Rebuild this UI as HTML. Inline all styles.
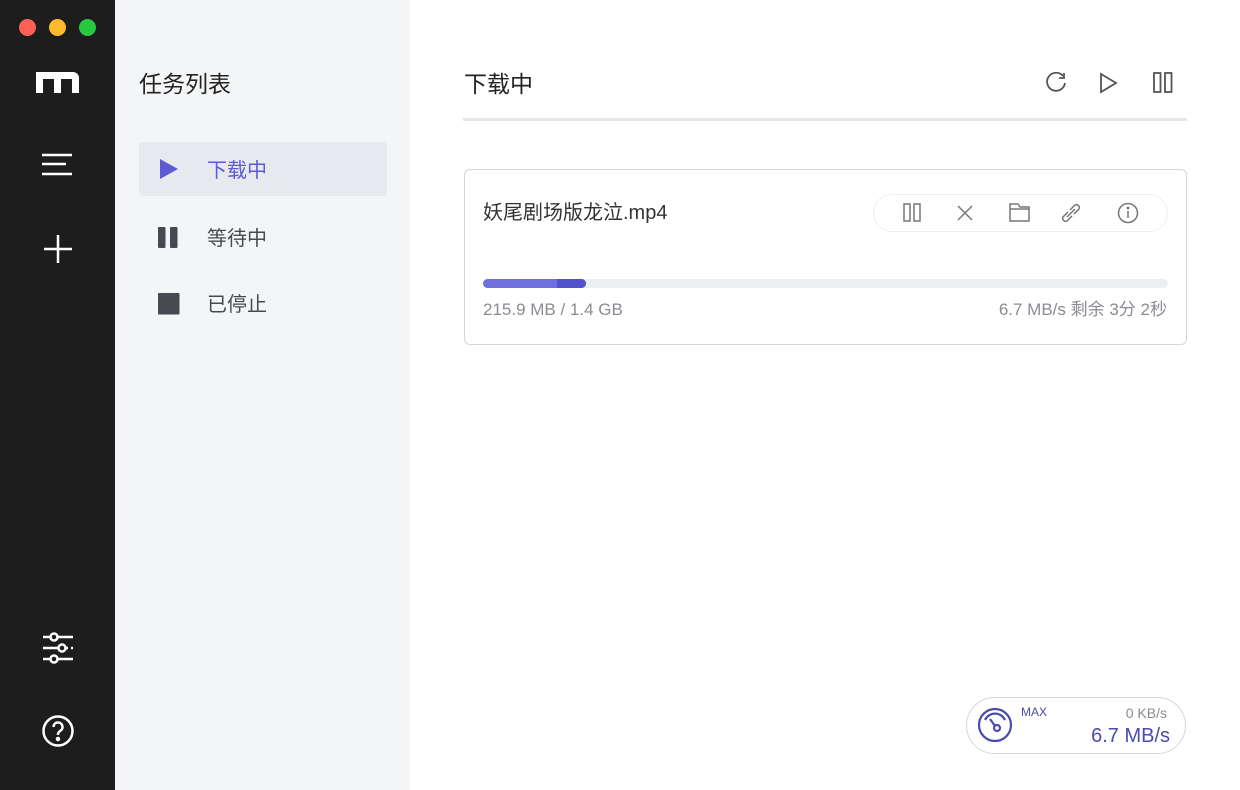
<!DOCTYPE html>
<html><head><meta charset="utf-8"><style>
*{margin:0;padding:0;box-sizing:border-box;line-height:1}
body{width:1240px;height:790px;overflow:hidden;font-family:"Liberation Sans","Noto Sans CJK SC",sans-serif;background:#fff;position:relative}
.side{position:absolute;left:0;top:0;width:115px;height:790px;background:#1d1d1d}
.dot{position:absolute;top:19px;width:17px;height:17px;border-radius:50%}
.nav{position:absolute;left:115px;top:0;width:295px;height:790px;background:#f4f5f7}
.abs{position:absolute;white-space:nowrap}
svg{position:absolute}
</style></head><body>
<div class="side">
<div class="dot" style="left:19px;background:#fe5f57"></div>
<div class="dot" style="left:49px;background:#febc2e"></div>
<div class="dot" style="left:79px;background:#28c840"></div>
<svg style="left:36px;top:71px" width="44" height="24" viewBox="0 0 44 24"><path d="M0 1H37a6 6 0 0 1 6 6V22H36V8H25V22H18V8H7V22H0Z" fill="#fff"/></svg>
<svg style="left:40px;top:152px" width="36" height="26" viewBox="0 0 36 26" stroke="#fff" stroke-width="2.5" fill="none"><path d="M2 3H32M2 12H26M2 22H32"/></svg>
<svg style="left:42px;top:233px" width="32" height="32" viewBox="0 0 32 32" stroke="#fff" stroke-width="2.5"><path d="M16 2V30M2 16H30"/></svg>
<svg style="left:40px;top:630px" width="36" height="36" viewBox="0 0 36 36" stroke="#fff" stroke-width="2.5" fill="none"><circle cx="14" cy="7" r="3.5"/><path d="M3 7H10M18 7H33"/><circle cx="22" cy="18" r="3.5"/><path d="M3 18H18M26 18H28M31 18H33"/><circle cx="14" cy="29" r="3.5"/><path d="M3 29H10M18 29H33"/></svg>
<svg style="left:41px;top:714px" width="34" height="34" viewBox="0 0 34 34" fill="none" stroke="#fff" stroke-width="2.5"><circle cx="17" cy="17" r="14.5"/><path d="M12.5 13a4.5 4.5 0 1 1 6.5 4c-1.5 1-2 2-2 4"/><circle cx="17" cy="25" r="1" fill="#fff"/></svg>
</div>
<div class="nav">
<div class="abs" style="left:24px;top:73px;font-size:23px;color:#222">任务列表</div>
<div class="abs" style="left:24px;top:142px;width:248px;height:54px;background:#e8e9ee;border-radius:4px"></div>
<svg style="left:44px;top:158px" width="20" height="22" viewBox="0 0 20 22"><path d="M1 1L19 11L1 21Z" fill="#5b5bd6"/></svg>
<div class="abs" style="left:92px;top:161px;font-size:20px;color:#5b5bd6">下载中</div>
<svg style="left:43px;top:227px" width="20" height="22"><rect x="0" y="0" width="7.5" height="21" rx="1" fill="#474a51"/><rect x="12" y="0" width="7.5" height="21" rx="1" fill="#474a51"/></svg>
<div class="abs" style="left:92px;top:229px;font-size:20px;color:#474a51">等待中</div>
<svg style="left:43px;top:293px" width="22" height="22"><rect x="0" y="0" width="21.5" height="21.5" rx="1" fill="#474a51"/></svg>
<div class="abs" style="left:92px;top:295px;font-size:20px;color:#474a51">已停止</div>
</div>
<div class="abs" style="left:464px;top:73px;font-size:23px;color:#222">下载中</div>
<svg style="left:1043px;top:70px" width="26" height="26" viewBox="0 0 26 26" fill="none" stroke="#555" stroke-width="1.8"><path d="M20 6A9 9 0 1 0 22 13"/><path d="M21 3V8H16"/></svg>
<svg style="left:1099px;top:72px" width="20" height="22" viewBox="0 0 20 22" fill="none" stroke="#555" stroke-width="1.8"><path d="M2 2L17 11L2 20Z"/></svg>
<svg style="left:1153px;top:72px" width="22" height="22" viewBox="0 0 22 22" fill="none" stroke="#555" stroke-width="1.8"><rect x="1" y="1" width="6.5" height="19"/><rect x="12" y="1" width="6.5" height="19"/></svg>
<div class="abs" style="left:463px;top:118px;width:724px;height:3px;background:#e6e7ea"></div>
<div class="abs" style="left:464px;top:169px;width:723px;height:176px;border:1px solid #d5d6da;border-radius:6px"></div>
<div class="abs" style="left:483px;top:203px;font-size:20px;color:#333">妖尾剧场版龙泣.mp4</div>
<div class="abs" style="left:873px;top:194px;width:295px;height:38px;border:1px solid #eceef1;border-radius:19px"></div>
<svg style="left:900px;top:200px" width="290" height="26" viewBox="0 0 290 26" fill="none" stroke="#777" stroke-width="1.5">
<rect x="4" y="4" width="6" height="17"/><rect x="14" y="4" width="6" height="17"/>
<path d="M58 6L72 20M72 6L58 20"/>
<path d="M110 4H118L120 7H129V21H110Z M110 9H129"/>
<path d="M170 10L175 5a3 3 0 0 1 4 4L174 14M168 12L163 17a3 3 0 0 0 4 4L172 16M167 17L175 9"/>
<circle cx="228" cy="13" r="9.5"/><path d="M228 11V18"/><circle cx="228" cy="8" r=".6" fill="#777"/>
</svg>
<div class="abs" style="left:483px;top:279px;width:685px;height:9px;background:#eceef2;border-radius:5px"></div>
<div class="abs" style="left:483px;top:279px;width:103px;height:9px;background:#6f6fe0;border-radius:5px"></div>
<div class="abs" style="left:557px;top:279px;width:29px;height:9px;background:#5252cf;border-radius:0 5px 5px 0"></div>
<div class="abs" style="left:483px;top:301px;font-size:17px;color:#8a8c92">215.9 MB / 1.4 GB</div>
<div class="abs" style="right:73px;top:301px;font-size:17px;color:#8a8c92">6.7 MB/s 剩余 3分 2秒</div>
<div class="abs" style="left:966px;top:697px;width:220px;height:57px;border:1px solid #d5d6da;border-radius:29px"></div>
<svg style="left:976px;top:706px" width="38" height="38" viewBox="0 0 38 38" fill="none" stroke="#4a4ab0" stroke-width="2.2"><circle cx="19" cy="19" r="16"/><path d="M9 14A11 11 0 0 1 29 14"/><circle cx="21" cy="22" r="3"/><path d="M19 20L14 13"/></svg>
<div class="abs" style="left:1021px;top:706px;font-size:12px;color:#4a4ab0">MAX</div>
<div class="abs" style="right:73px;top:706px;font-size:14px;color:#8a8c92">0 KB/s</div>
<div class="abs" style="right:70px;top:726px;font-size:20px;color:#4a4ab0">6.7 MB/s</div>
</body></html>
